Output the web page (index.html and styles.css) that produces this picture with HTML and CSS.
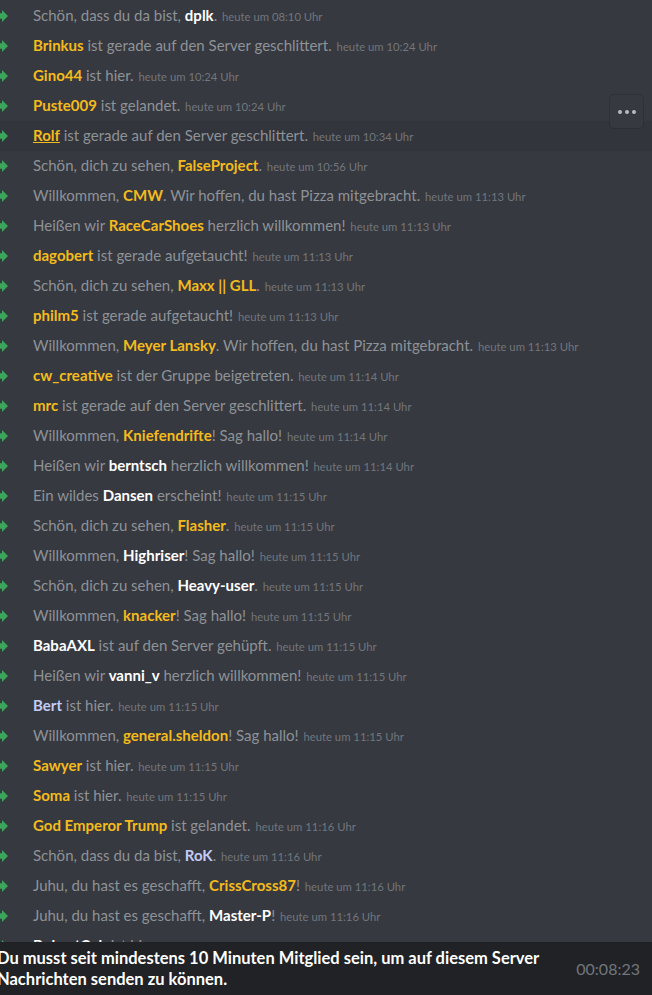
FILE: index.html
```html
<!DOCTYPE html>
<html lang="de">
<head>
    <meta charset="UTF-8">
    <meta name="viewport" content="width=device-width, initial-scale=1.0">
    <title>Willkommen</title>
    <link rel="stylesheet" href="styles.css">
</head>
<body>
    <div class="messages">
        <div class="row"><span class="arrow"></span><p class="msg">Schön, dass du da bist, <b class="white">dplk</b>. <span class="time">heute um 08:10 Uhr</span></p></div>
        <div class="row"><span class="arrow"></span><p class="msg"><b class="gold">Brinkus</b> ist gerade auf den Server geschlittert. <span class="time">heute um 10:24 Uhr</span></p></div>
        <div class="row"><span class="arrow"></span><p class="msg"><b class="gold">Gino44</b> ist hier. <span class="time">heute um 10:24 Uhr</span></p></div>
        <div class="row"><span class="arrow"></span><p class="msg"><b class="gold">Puste009</b> ist gelandet. <span class="time">heute um 10:24 Uhr</span></p></div>
        <div class="row hover"><span class="arrow"></span><p class="msg"><b class="gold under">Rolf</b> ist gerade auf den Server geschlittert. <span class="time">heute um 10:34 Uhr</span></p>
            <button class="more"><i></i><i></i><i></i></button></div>
        <div class="row"><span class="arrow"></span><p class="msg">Schön, dich zu sehen, <b class="gold">FalseProject</b>. <span class="time">heute um 10:56 Uhr</span></p></div>
        <div class="row"><span class="arrow"></span><p class="msg">Willkommen, <b class="gold">CMW</b>. Wir hoffen, du hast Pizza mitgebracht. <span class="time">heute um 11:13 Uhr</span></p></div>
        <div class="row"><span class="arrow"></span><p class="msg">Heißen wir <b class="gold">RaceCarShoes</b> herzlich willkommen! <span class="time">heute um 11:13 Uhr</span></p></div>
        <div class="row"><span class="arrow"></span><p class="msg"><b class="gold">dagobert</b> ist gerade aufgetaucht! <span class="time">heute um 11:13 Uhr</span></p></div>
        <div class="row"><span class="arrow"></span><p class="msg">Schön, dich zu sehen, <b class="gold">Maxx || GLL</b>. <span class="time">heute um 11:13 Uhr</span></p></div>
        <div class="row"><span class="arrow"></span><p class="msg"><b class="gold">philm5</b> ist gerade aufgetaucht! <span class="time">heute um 11:13 Uhr</span></p></div>
        <div class="row"><span class="arrow"></span><p class="msg">Willkommen, <b class="gold">Meyer Lansky</b>. Wir hoffen, du hast Pizza mitgebracht. <span class="time">heute um 11:13 Uhr</span></p></div>
        <div class="row"><span class="arrow"></span><p class="msg"><b class="gold">cw_creative</b> ist der Gruppe beigetreten. <span class="time">heute um 11:14 Uhr</span></p></div>
        <div class="row"><span class="arrow"></span><p class="msg"><b class="gold">mrc</b> ist gerade auf den Server geschlittert. <span class="time">heute um 11:14 Uhr</span></p></div>
        <div class="row"><span class="arrow"></span><p class="msg">Willkommen, <b class="gold">Kniefendrifte</b>! Sag hallo! <span class="time">heute um 11:14 Uhr</span></p></div>
        <div class="row"><span class="arrow"></span><p class="msg">Heißen wir <b class="white">berntsch</b> herzlich willkommen! <span class="time">heute um 11:14 Uhr</span></p></div>
        <div class="row"><span class="arrow"></span><p class="msg">Ein wildes <b class="white">Dansen</b> erscheint! <span class="time">heute um 11:15 Uhr</span></p></div>
        <div class="row"><span class="arrow"></span><p class="msg">Schön, dich zu sehen, <b class="gold">Flasher</b>. <span class="time">heute um 11:15 Uhr</span></p></div>
        <div class="row"><span class="arrow"></span><p class="msg">Willkommen, <b class="white">Highriser</b>! Sag hallo! <span class="time">heute um 11:15 Uhr</span></p></div>
        <div class="row"><span class="arrow"></span><p class="msg">Schön, dich zu sehen, <b class="white">Heavy-user</b>. <span class="time">heute um 11:15 Uhr</span></p></div>
        <div class="row"><span class="arrow"></span><p class="msg">Willkommen, <b class="gold">knacker</b>! Sag hallo! <span class="time">heute um 11:15 Uhr</span></p></div>
        <div class="row"><span class="arrow"></span><p class="msg"><b class="white">BabaAXL</b> ist auf den Server gehüpft. <span class="time">heute um 11:15 Uhr</span></p></div>
        <div class="row"><span class="arrow"></span><p class="msg">Heißen wir <b class="white">vanni_v</b> herzlich willkommen! <span class="time">heute um 11:15 Uhr</span></p></div>
        <div class="row"><span class="arrow"></span><p class="msg"><b class="blue">Bert</b> ist hier. <span class="time">heute um 11:15 Uhr</span></p></div>
        <div class="row"><span class="arrow"></span><p class="msg">Willkommen, <b class="gold">general.sheldon</b>! Sag hallo! <span class="time">heute um 11:15 Uhr</span></p></div>
        <div class="row"><span class="arrow"></span><p class="msg"><b class="gold">Sawyer</b> ist hier. <span class="time">heute um 11:15 Uhr</span></p></div>
        <div class="row"><span class="arrow"></span><p class="msg"><b class="gold">Soma</b> ist hier. <span class="time">heute um 11:15 Uhr</span></p></div>
        <div class="row"><span class="arrow"></span><p class="msg"><b class="gold">God Emperor Trump</b> ist gelandet. <span class="time">heute um 11:16 Uhr</span></p></div>
        <div class="row"><span class="arrow"></span><p class="msg">Schön, dass du da bist, <b class="blue">RoK</b>. <span class="time">heute um 11:16 Uhr</span></p></div>
        <div class="row"><span class="arrow"></span><p class="msg">Juhu, du hast es geschafft, <b class="gold">CrissCross87</b>! <span class="time">heute um 11:16 Uhr</span></p></div>
        <div class="row"><span class="arrow"></span><p class="msg">Juhu, du hast es geschafft, <b class="white">Master-P</b>! <span class="time">heute um 11:16 Uhr</span></p></div>
        <div class="row"><span class="arrow"></span><p class="msg"><b class="white">BobcatCub</b> ist hier. <span class="time">heute um 11:16 Uhr</span></p></div>
    </div>

    <div class="notice">
        <p class="notice-text">Du musst seit mindestens 10 Minuten Mitglied sein, um auf diesem Server Nachrichten senden zu können.</p>
        <span class="timer">00:08:23</span>
    </div>
</body>
</html>
```

FILE: styles.css
```css
html, body {
    height: 100%;
}

body {
    margin: 0;
    background-color: #36393f;
    font-family: Lato, "Open Sans", sans-serif;
    overflow: hidden;
    position: relative;
}

.messages {
    padding-top: 1px;
}

.row {
    position: relative;
    display: flex;
    align-items: center;
    height: 30px;
}

.row.hover {
    background-color: #32353b;
}

.arrow {
    flex: none;
    width: 8px;
    height: 12px;
    margin-right: 25px;
    background-color: #3ba55c;
    clip-path: polygon(0 28%, 2px 28%, 2px 0, 8px 50%, 2px 100%, 2px 72%, 0 72%);
}

.msg {
    margin: 0;
    font-size: 15px;
    line-height: 22px;
    color: #8e9297;
    white-space: nowrap;
}

.msg b {
    font-weight: 700;
}

.gold {
    color: #f4bb1c;
}

.white {
    color: #ffffff;
}

.blue {
    color: #c3cbf7;
}

.under {
    text-decoration: underline;
}

.time {
    font-size: 11.3px;
    color: #72767d;
    margin-left: 1px;
}

.more {
    position: absolute;
    right: 9px;
    top: -26px;
    width: 33px;
    height: 33px;
    padding: 0;
    border: none;
    border-radius: 4px;
    background-color: #36393f;
    box-shadow: 0 0 0 1px rgba(4, 4, 5, 0.15);
    display: flex;
    align-items: center;
    justify-content: center;
    gap: 3px;
}

.more i {
    width: 4px;
    height: 4px;
    border-radius: 50%;
    background-color: #b9bbbe;
}

.notice {
    position: absolute;
    left: 0;
    right: 0;
    bottom: 0;
    height: 53px;
    background-color: #202225;
    display: flex;
    align-items: center;
    justify-content: space-between;
}

.notice-text {
    margin: 0 0 0 -3px;
    width: 565px;
    font-size: 16.5px;
    line-height: 21px;
    font-weight: 700;
    color: #ffffff;
}

.timer {
    margin-right: 12px;
    font-size: 16px;
    color: #72767d;
}
```
